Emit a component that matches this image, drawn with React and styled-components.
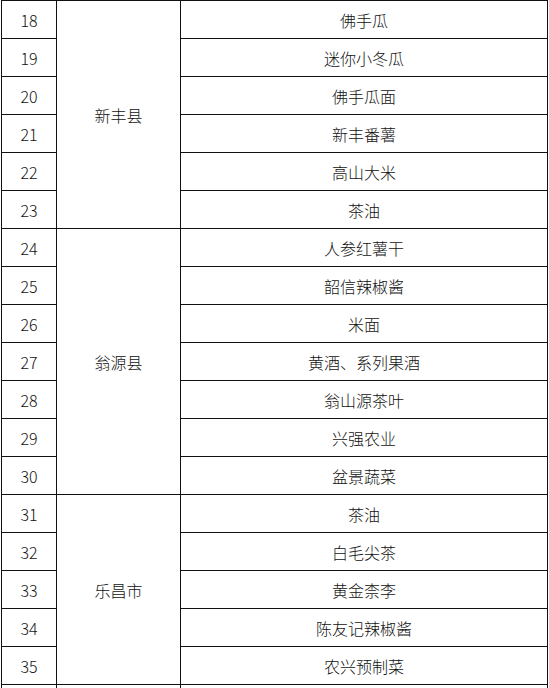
import React from "react";
import styled, { createGlobalStyle } from "styled-components";

const GlobalStyle = createGlobalStyle`
  html, body {
    margin: 0;
    padding: 0;
    background: #fff;
    overflow: hidden;
  }
`;

const groups = [
  {
    county: "新丰县",
    items: ["佛手瓜", "迷你小冬瓜", "佛手瓜面", "新丰番薯", "高山大米", "茶油"]
  },
  {
    county: "翁源县",
    items: [
      "人参红薯干",
      "韶信辣椒酱",
      "米面",
      "黄酒、系列果酒",
      "翁山源茶叶",
      "兴强农业",
      "盆景蔬菜"
    ]
  },
  {
    county: "乐昌市",
    items: ["茶油", "白毛尖茶", "黄金柰李", "陈友记辣椒酱", "农兴预制菜"]
  }
];

const Page = styled.div`
  padding: 0 0 0 1px;
`;

const Table = styled.table`
  border-collapse: collapse;
  table-layout: fixed;
  width: 546px;
  font-family: "Noto Sans CJK SC", "Liberation Sans", sans-serif;
  font-size: 16px;
  font-weight: 300;
  color: #111;
`;

const Cell = styled.td`
  border: 1px solid #111;
  height: 37px;
  padding: 0;
  text-align: center;
  vertical-align: middle;
  line-height: 20px;
  white-space: nowrap;
`;

const NumCell = styled(Cell)`
  font-family: "Noto Sans CJK SC", sans-serif;
  font-size: 16px;
`;

const App = () => {
  let n = 18;
  return (
    <Page>
      <GlobalStyle />
      <Table>
        <colgroup>
          <col style={{ width: 55 }} />
          <col style={{ width: 124 }} />
          <col style={{ width: 367 }} />
        </colgroup>
        <tbody>
          {groups.map(g =>
            g.items.map((item, i) => {
              const num = n++;
              return (
                <tr key={num}>
                  <NumCell>{num}</NumCell>
                  {i === 0 && <Cell rowSpan={g.items.length}>{g.county}</Cell>}
                  <Cell>{item}</Cell>
                </tr>
              );
            })
          )}
          <tr>
            <NumCell />
            <Cell />
            <Cell />
          </tr>
        </tbody>
      </Table>
    </Page>
  );
};

export default App;
